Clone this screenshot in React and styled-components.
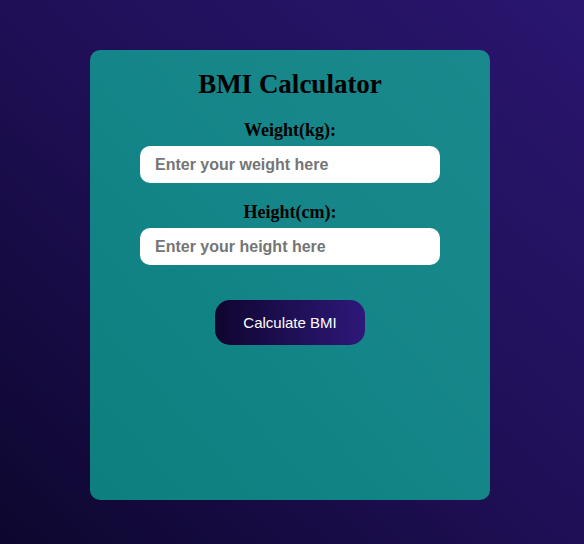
import React from "react";
import styled, { createGlobalStyle } from "styled-components";

const Global = createGlobalStyle`
  html, body { margin: 0; padding: 0; }
  body {
    min-height: 544px;
    background: linear-gradient(to top right, #0d072e 0%, #1f0f56 50%, #2a166f 100%);
    font-family: "Liberation Serif", "Times New Roman", serif;
  }
  * { box-sizing: border-box; }
`;

const Page = styled.div`
  display: flex;
  justify-content: center;
  padding: 50px 4px 0 0;
  height: 544px;
`;

const Card = styled.div`
  width: 400px;
  height: 450px;
  border-radius: 10px;
  background: linear-gradient(to top right, #0d7f7e 0%, #148588 50%, #1a898d 100%);
  display: flex;
  flex-direction: column;
  align-items: center;
  padding-top: 20px;
`;

const Title = styled.h1`
  margin: 0;
  font-family: "Liberation Serif", "Times New Roman", serif;
  font-size: 27px;
  line-height: 28px;
  font-weight: bold;
  color: #000;
`;

const Field = styled.div`
  display: flex;
  flex-direction: column;
  align-items: center;
  gap: 6px;
  margin-top: ${(p) => p.$top}px;
`;

const Label = styled.label`
  font-family: "Liberation Serif", "Times New Roman", serif;
  font-size: 18px;
  line-height: 20px;
  font-weight: bold;
  color: #000;
`;

const Input = styled.input`
  width: 300px;
  height: 37px;
  border: none;
  outline: none;
  border-radius: 10px;
  background: #fff;
  padding: 0 15px;
  font-family: "Liberation Sans", Arial, sans-serif;
  font-size: 16px;
  font-weight: bold;
  color: #222;
  &::placeholder { color: #757575; }
`;

const Button = styled.button`
  margin-top: 35px;
  width: 150px;
  height: 45px;
  border: none;
  border-radius: 15px;
  background: linear-gradient(to right, #0f052f, #2e1879);
  color: #fff;
  font-family: "Liberation Sans", Arial, sans-serif;
  font-size: 15px;
  cursor: pointer;
`;

export default function App() {
  return (
    <>
      <Global />
      <Page>
        <Card>
          <Title>BMI Calculator</Title>
          <Field $top={22}>
            <Label htmlFor="w">Weight(kg):</Label>
            <Input id="w" placeholder="Enter your weight here" />
          </Field>
          <Field $top={19}>
            <Label htmlFor="h">Height(cm):</Label>
            <Input id="h" placeholder="Enter your height here" />
          </Field>
          <Button>Calculate BMI</Button>
        </Card>
      </Page>
    </>
  );
}
